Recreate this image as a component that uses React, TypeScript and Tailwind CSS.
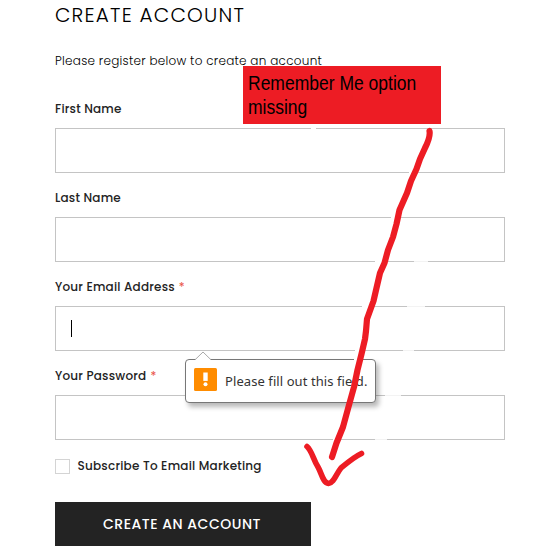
import type { ReactNode } from "react";

function Field({ label, required = false, children }: { label: string; required?: boolean; children?: ReactNode }) {
  return (
    <div className="mb-4">
      <div className="flex h-[28px] items-start text-[12px] leading-[18px] font-medium text-[#232323]">
        <span className="tracking-[0.2px]">{label}</span>
        {required && <span className="ml-[4px] font-normal text-[#e95144]">*</span>}
      </div>
      <div className="flex h-[45px] w-[450px] items-center border border-[#c4c4c4] px-[15px]">{children}</div>
    </div>
  );
}

function ValidationBubble() {
  return (
    <div className="absolute top-[359px] left-[185px] flex h-[44px] w-[191px] items-center rounded-[4px] border border-[#777] bg-white pl-2 shadow-[3px_4px_5px_rgba(0,0,0,0.28)]">
      <svg className="absolute -top-[9px] left-[8px]" width="20" height="10" viewBox="0 0 20 10">
        <path d="M1 9 L9 1 L17 9 V10 H1Z" fill="#fff" />
        <path d="M1 8.8 L9 1 L17 8.8" fill="none" stroke="#aaa" />
      </svg>
      <svg className="mb-[3px] shrink-0" width="23" height="23" viewBox="0 0 23 23">
        <rect width="23" height="23" rx="1.5" fill="#ff8c00" />
        <path d="M9.3 4.500h4.400v8.400H9.300z" fill="#fff" />
        <circle cx="11.5" cy="16.2" r="2" fill="#fff" />
      </svg>
      <span className="mt-[2px] ml-2 font-['Noto_Sans',sans-serif] text-[13px] tracking-[0.08px] whitespace-nowrap text-[#333]">
        Please fill out this field.
      </span>
    </div>
  );
}

function Arrow() {
  return (
    <svg className="absolute inset-0" width="546" height="557" viewBox="0 0 546 557" fill="none">
      <g stroke="#fff" strokeWidth="2">
        <path d="M311 128.5h5M409 172.5h8M391 217.5h8M375 261.5h10M362 306.5h9M355 350.5h8M354 359.5h7M333 439.5h5" />
        <path d="M414 261.5h14M407 306.5h18M403 350.5h11M385 395.5h16M375 439.5h12" strokeOpacity=".8" />
      </g>
      <g stroke="#ed1c24" strokeLinecap="round" strokeLinejoin="round">
        <path
          strokeWidth="6.2"
          d="M429.500 131C430.500 136 427 144 425 148L420 159L416.500 169L411 181L407 193L399.500 210L396.500 224L393 237L388 250L384.500 263L380 273L376.500 288L373.500 301L367 319L366 331L365 339L361.500 354L357.500 370L354 387L349 405L343 427L336.500 443L332 457"
        />
        <path
          strokeWidth="5.6"
          d="M307 446.500C312 451 313 459 318 467C322 474 323 483 328.500 483.500C334 483 336 474 341 468C347 463 354 457 361.500 453.500"
        />
      </g>
    </svg>
  );
}

export default function App() {
  return (
    <main className="relative h-[557px] w-[546px] overflow-hidden bg-white pl-[55px] font-[Poppins,Inter,sans-serif] text-[#232323]">
      <h1 className="h-[52px] pt-[3px] text-[20px] leading-6 font-light tracking-[1.2px] text-black">CREATE ACCOUNT</h1>
      <p className="h-[48px] text-[12px] leading-[18px] font-light tracking-[0.27px] text-black">
        Please register below to create an account
      </p>
      <Field label="First Name" />
      <Field label="Last Name" />
      <Field label="Your Email Address" required>
        <span className="h-[17px] w-px bg-black" />
      </Field>
      <Field label="Your Password" required />
      <label className="flex h-[20px] items-center text-[12px] font-medium text-[#232323]">
        <span className="mr-[7.500px] h-[15px] w-[15px] border border-[#d4d4d4]" />
        <span className="tracking-[0.22px]">Subscribe To Email Marketing</span>
      </label>
      <button className="mt-[26px] block h-[44px] w-[256px] bg-[#232323] pr-[2px] text-[14px] font-medium text-white">
        <span className="tracking-[0.52px]">CREATE AN ACCOUNT</span>
      </button>
      <div className="absolute top-[66px] left-[243px] h-[58px] w-[198px] bg-[#ed1c24] pt-[5px] pl-[5px] font-['Liberation_Sans',Arial,sans-serif] text-[20px] leading-[24px] text-black">
        <div className="origin-left scale-x-[0.875] whitespace-nowrap">Remember Me option</div>
        <div className="origin-left scale-x-[0.875]">missing</div>
      </div>
      <ValidationBubble />
      <Arrow />
    </main>
  );
}
